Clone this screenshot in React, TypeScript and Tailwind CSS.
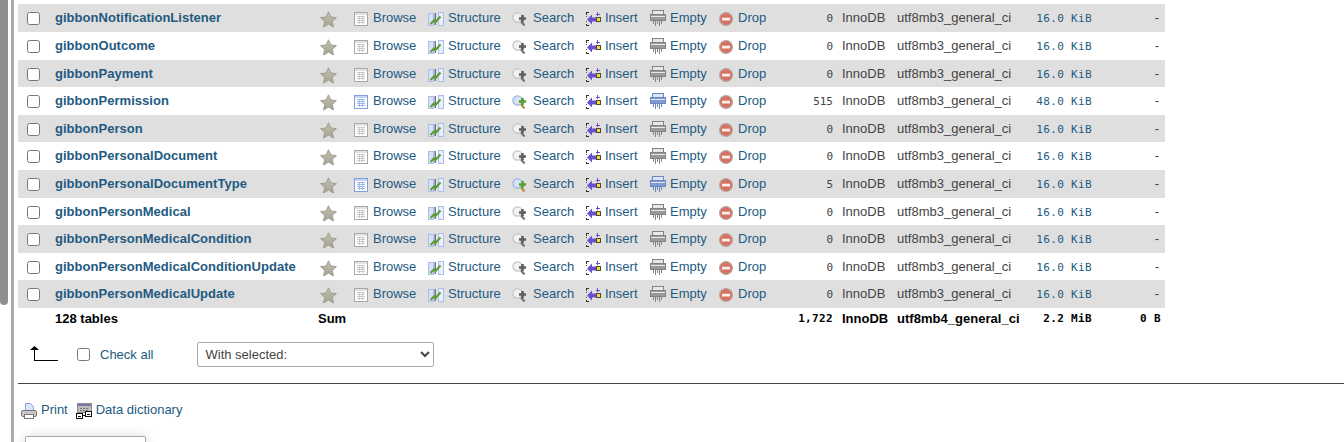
import React from "react";

const names = [
  "gibbonNotificationListener",
  "gibbonOutcome",
  "gibbonPayment",
  "gibbonPermission",
  "gibbonPerson",
  "gibbonPersonalDocument",
  "gibbonPersonalDocumentType",
  "gibbonPersonMedical",
  "gibbonPersonMedicalCondition",
  "gibbonPersonMedicalConditionUpdate",
  "gibbonPersonMedicalUpdate",
];
const counts: Record<string, string> = { gibbonPermission: "515", gibbonPersonalDocumentType: "5" };
const sizes: Record<string, string> = { gibbonPermission: "48.0" };

function Star() {
  return (
    <svg width="17" height="17" viewBox="0 0 17 17" className="shrink-0 mt-[7px]">
      <defs>
        <linearGradient id="st" x1="0" y1="0" x2="0" y2="1">
          <stop offset="0" stopColor="#c4c2b0" />
          <stop offset="1" stopColor="#a3a193" />
        </linearGradient>
      </defs>
      <path d="M8.5.8l2.4 5.2 5.5.6-4.1 3.8 1.2 5.6-5-2.9-5 2.9 1.2-5.6L.6 6.6l5.5-.6z" fill="url(#st)" stroke="#9c9a8a" strokeWidth=".9" />
    </svg>
  );
}

function BrowseIcon({ on }: { on: boolean }) {
  const b = on ? "#7f9fe0" : "#a8a8a8";
  const g = on ? "#9db8ea" : "#c9c9c9";
  const h = on ? "#c5d5f5" : "#e2e2e2";
  return (
    <svg width="14" height="14" viewBox="0 0 14 14" className="shrink-0 mt-[8px]" shapeRendering="crispEdges">
      <rect x=".5" y=".5" width="13" height="13" fill="#fff" stroke={b} />
      <rect x="1" y="1" width="12" height="2" fill={h} />
      <path d="M3 4.500h8M3 6.500h8M3 8.500h8M3 10.500h8" stroke={g} fill="none" />
      <path d="M5.500 4v7.500M8.500 4v7.500" stroke={g} fill="none" />
    </svg>
  );
}

function StructureIcon() {
  return (
    <svg width="16" height="14" viewBox="0 0 16 14" className="shrink-0 mt-[8px]">
      <rect x=".5" y="1.500" width="5" height="12" fill="#d6e2f8" stroke="#a9bfea" />
      <rect x="10.500" y=".5" width="5" height="13" fill="#e9effc" stroke="#a9bfea" />
      <rect x="6.500" y="1" width="1.500" height="12" fill="#6b7488" />
      <path d="M2.500 12l3.500-3.500 1.500 1.500 5-5.500" fill="none" stroke="#5c9a30" strokeWidth="2" />
    </svg>
  );
}

function SearchIcon({ on }: { on: boolean }) {
  return (
    <svg width="15" height="14" viewBox="0 0 15 14" className="shrink-0 mt-[8px] -ml-[1px]">
      <circle cx="5.500" cy="5.500" r="4.600" fill={on ? "#d5e2f8" : "#f2f2f2"} stroke={on ? "#9db4dc" : "#c4c4c4"} strokeWidth="1.200" />
      <path d="M9 9.500l3.500 4" stroke={on ? "#b58a3c" : "#6e6e6e"} strokeWidth="2" />
      <path d="M10.500 3v7M7 6.500h7" stroke={on ? "#58a032" : "#5e5e5e"} strokeWidth="2.600" />
    </svg>
  );
}

function InsertIcon() {
  return (
    <svg width="15" height="16" viewBox="0 0 15 16" className="shrink-0 mt-[7px]" shapeRendering="crispEdges">
      <path d="M3 1.500H.5V3.500M.5 12.500v2H3" fill="none" stroke="#333" />
      <path d="M.5 5v1M.5 10v1" stroke="#555" fill="none" />
      <path d="M1 8.500l5-5v3h4v4H6v3z" fill="#6a4fd0" shapeRendering="auto" />
      <rect x="10.500" y="6.500" width="4" height="4" fill="#f4d94c" stroke="#4a4a30" />
      <path d="M11.500 1v4M9.500 3h4" stroke="#6a4fd0" />
    </svg>
  );
}

function EmptyIcon({ on }: { on: boolean }) {
  const body = on ? "#7f9ad6" : "#9a9a9a";
  const lite = on ? "#dbe5f8" : "#e8e8e8";
  const line = on ? "#6f86bc" : "#838383";
  return (
    <svg width="16" height="16" viewBox="0 0 16 16" className="shrink-0 mt-[6px]" shapeRendering="crispEdges">
      <rect x="2.500" y=".5" width="11" height="4" fill={lite} stroke={line} />
      <rect x=".5" y="4.500" width="15" height="6" fill={body} stroke={line} />
      <path d="M1 6.500h14" stroke={lite} />
      <path d="M3.500 11v3M5.500 11v5M7.500 11v3M9.500 11v5M11.500 11v3" stroke={line} />
    </svg>
  );
}

function DropIcon() {
  return (
    <svg width="14" height="14" viewBox="0 0 14 14" className="shrink-0 mt-[8px]">
      <circle cx="7" cy="7" r="6.400" fill="#d6705f" stroke="#b9a49c" strokeWidth="1.200" />
      <rect x="3" y="5.700" width="8" height="2.800" fill="#fbeeee" />
    </svg>
  );
}

function PrintIcon() {
  return (
    <svg width="16" height="16" viewBox="0 0 16 16" className="shrink-0">
      <path d="M4.500.5h5l3 3v5h-8z" fill="#dbe6fa" stroke="#8ea5d6" />
      <rect x=".5" y="7.500" width="15" height="6" rx="1.500" fill="#c9c9c9" stroke="#777" />
      <rect x="3.500" y="11.500" width="9" height="4" fill="#fff" stroke="#777" />
    </svg>
  );
}

function DictIcon() {
  return (
    <svg width="16" height="16" viewBox="0 0 16 16" className="shrink-0" shapeRendering="crispEdges">
      <rect x="1.500" y=".5" width="14" height="9" fill="#bdbdbd" stroke="#8c8c8c" />
      <rect x="2" y="1" width="13" height="2" fill="#7b78a8" />
      <path d="M4 5h9M4 7h9" stroke="#777" strokeDasharray="2 1" />
      <rect x=".5" y="10.500" width="6" height="5" fill="#fff" stroke="#111" />
      <rect x="9.500" y="8.500" width="6" height="5" fill="#fff" stroke="#111" />
      <path d="M2 13h3M11 11h3M6 12h4" stroke="#111" />
    </svg>
  );
}

function Action({ icon, label, gap }: { icon: React.ReactNode; label: string; gap: string }) {
  return (
    <div className={`flex items-start ${gap}`}>
      {icon}
      <span className="text-[#235a81] mt-[6px]">{label}</span>
    </div>
  );
}

const grid =
  "grid grid-cols-[37px_265px_34px_74px_85px_73px_64px_69px_61px_53px_9px_55px_133px_62px_73px]";

function Row({ name, index }: { name: string; index: number }) {
  const c = counts[name];
  return (
    <div className={`${grid} items-start h-[27.6px] ${index % 2 === 0 ? "bg-[#dfdfdf]" : "bg-white"}`}>
      <input type="checkbox" readOnly className="ml-[9px] mt-[8px] w-[13px] h-[13px]" />
      <span className="font-bold text-[#235a81] mt-[6px] tracking-[0.03px] whitespace-nowrap">{name}</span>
      <Star />
      <Action gap="gap-[5px]" icon={<BrowseIcon on={!!c} />} label="Browse" />
      <Action gap="gap-[4px]" icon={<StructureIcon />} label="Structure" />
      <Action gap="gap-[6px]" icon={<SearchIcon on={!!c} />} label="Search" />
      <Action gap="gap-[4px]" icon={<InsertIcon />} label="Insert" />
      <Action gap="gap-[4px]" icon={<EmptyIcon on={!!c} />} label="Empty" />
      <Action gap="gap-[5px]" icon={<DropIcon />} label="Drop" />
      <span className="text-right mt-[7px] font-['DejaVu_Sans_Mono',monospace] text-[11px] text-[#444]">{c ?? "0"}</span>
      <span />
      <span className="text-[#444] mt-[6px]">InnoDB</span>
      <span className="text-[#444] mt-[6px]">utf8mb3_general_ci</span>
      <span className="text-right mt-[7px] font-['DejaVu_Sans_Mono',monospace] text-[11px] text-[#235a81] tracking-[0.35px]">
        {sizes[name] ?? "16.0"} KiB
      </span>
      <span className="text-right mt-[6px] pr-[6px] text-[#444]">-</span>
    </div>
  );
}

export default function App() {
  return (
    <div className="h-[442px] w-[1344px] overflow-hidden flex bg-white font-['Liberation_Sans',Arial,sans-serif] text-[13px] leading-[15px]">
      <div className="w-[8px] shrink-0">
        <div className="h-[305px] w-[8px] bg-[#8e8e8e] rounded-b-[4px]" />
      </div>
      <div className="w-[3px] shrink-0" />
      <div className="w-[3px] shrink-0 bg-[#ababab]" />
      <main className="flex-1 min-w-0 pl-[4px] pt-[4.4px]">
        <div className="w-[1147px]">
          {names.map((n, i) => (
            <Row key={n} name={n} index={i} />
          ))}
          <div className={`${grid} items-center h-[24px] pb-[2px] font-bold text-black`}>
            <span />
            <span>128 tables</span>
            <span className="col-span-7 -ml-[2px]">Sum</span>
            <span className="text-right font-['DejaVu_Sans_Mono',monospace] text-[11px] tracking-[0.35px]">1,722</span>
            <span />
            <span>InnoDB</span>
            <span className="whitespace-nowrap tracking-[0.03px]">utf8mb4_general_ci</span>
            <span className="text-right font-['DejaVu_Sans_Mono',monospace] text-[11px] tracking-[0.35px]">2.2 MiB</span>
            <span className="text-right pr-[4px] font-['DejaVu_Sans_Mono',monospace] text-[11px] tracking-[0.35px]">0 B</span>
          </div>
        </div>
        <div className="flex items-center h-[25px] mt-[10px] pl-[12px]">
          <svg width="28" height="15" viewBox="0 0 28 15" className="shrink-0 mt-[-2px]" shapeRendering="crispEdges">
            <path d="M4.500 3v11.500H28" fill="none" stroke="#000" />
            <path d="M4.500 0L9 4H0z" fill="#000" shapeRendering="auto" />
          </svg>
          <input type="checkbox" readOnly className="ml-[19px] w-[13px] h-[13px]" />
          <span className="ml-[10px] text-[#235a81]">Check all</span>
          <select className="ml-[44px] w-[237px] h-[25px] bg-white border border-[#aaaaaa] rounded-[2px] pl-[3px] text-[13px] text-[#444]">
            <option>With selected:</option>
          </select>
        </div>
        <div className="h-px bg-[#444] mt-[16px]" />
        <div className="flex items-center h-[16px] mt-[19px] pl-[3px]">
          <PrintIcon />
          <span className="ml-[4px] text-[#235a81] -translate-y-[1px]">Print</span>
          <span className="ml-[8px]"><DictIcon /></span>
          <span className="ml-[4px] text-[#235a81] -translate-y-[1px]">Data dictionary</span>
        </div>
        <div className="ml-[7px] mt-[17px] w-[121px] h-[20px] bg-white border border-[#aaaaaa] rounded-t-[2px] shadow-[0_0_12px_rgba(0,0,0,0.15)]" />
      </main>
    </div>
  );
}
